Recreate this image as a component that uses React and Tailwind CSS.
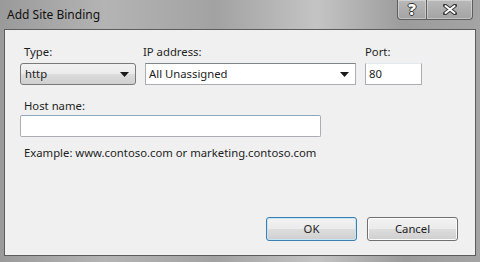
import React from 'react';

const font = { fontFamily: '"Noto Sans", "Open Sans", sans-serif' };

const Arrow = () => (
  <svg width="9" height="5" viewBox="0 0 9 5" className="shrink-0">
    <path d="M0 0 H9 L4.5 5 Z" fill="#1a1a1a" />
  </svg>
);

const Label = ({ children, className = '' }) => (
  <div className={`h-[16px] leading-[16px] text-[11.3px] text-[#1e1e1e] whitespace-nowrap ${className}`}>{children}</div>
);

const btnBg = 'bg-[linear-gradient(180deg,#f2f2f2_0%,#ebebeb_50%,#dddddd_51%,#cfcfcf_100%)]';

export default function App() {
  return (
    <div
      style={font}
      className="w-[480px] h-[262px] flex flex-col px-[4px] pb-[6px] bg-[linear-gradient(90deg,#9a9a9a_0%,#b4b4b4_22%,#a2a2a2_45%,#c4c4c4_66%,#9c9c9c_84%,#a4a4a4_100%)] overflow-hidden"
    >
      {/* Title bar */}
      <div className="h-[29px] flex items-start justify-between shrink-0">
        <div className="pl-[3px] pt-[7px] text-[12px] leading-[16px] text-[#111]">Add Site Binding</div>
        <div className="flex mr-[3px]">
          <div className="w-[30px] h-[20px] flex items-center justify-center border border-t-0 border-[#5e5e5e] rounded-bl-[4px] bg-[linear-gradient(180deg,#b9b9b9,#a3a3a3)] shadow-[inset_0_0_0_1px_rgba(255,255,255,0.35)]">
            <span className="text-[15px] font-black leading-none text-white [text-shadow:1px_0_0_#333,-1px_0_0_#333,0_1px_0_#333,0_-1px_0_#333]">?</span>
          </div>
          <div className="w-[46px] h-[20px] flex items-center justify-center border border-l-0 border-t-0 border-[#5e5e5e] rounded-br-[4px] bg-[linear-gradient(180deg,#b9b9b9,#a3a3a3)] shadow-[inset_0_0_0_1px_rgba(255,255,255,0.35)]">
            <svg width="14" height="11" viewBox="0 0 14 11">
              <path d="M2 1.5 L12 9.5 M12 1.5 L2 9.5" stroke="#3a3a3a" strokeWidth="4" strokeLinecap="round" />
              <path d="M2.5 2 L11.5 9 M11.5 2 L2.5 9" stroke="#fff" strokeWidth="2" strokeLinecap="round" />
            </svg>
          </div>
        </div>
      </div>

      {/* Client area */}
      <div className="flex-1 flex flex-col border border-[#5c5c5c] bg-[#f0f0f0] pl-[15px] pr-[17px] pt-[14px] pb-[14px] text-[11.3px] text-[#1e1e1e]">
        <div className="flex gap-[9px]">
          <div className="w-[116px] flex flex-col">
            <Label className="ml-[4px] mb-[3px]">Type:</Label>
            <div className={`h-[22px] flex items-center justify-between pl-[4px] pr-[6px] border border-[#7a7a7a] rounded-[3px] ${btnBg}`}>
              <span className="leading-[16px]">http</span>
              <Arrow />
            </div>
          </div>
          <div className="w-[211px] flex flex-col">
            <Label className="-ml-[2px] mb-[3px]">IP address:</Label>
            <div className="h-[22px] flex items-center justify-between pl-[3px] pr-[6px] border border-[#abadb3] border-t-[#7f8487] bg-white">
              <span className="leading-[16px]">All Unassigned</span>
              <Arrow />
            </div>
          </div>
          <div className="w-[57px] flex flex-col">
            <Label className="mb-[3px]">Port:</Label>
            <div className="h-[22px] flex items-center pl-[3px] border border-[#abadb3] border-t-[#e3e9ef] bg-white">
              <span className="leading-[16px]">80</span>
            </div>
          </div>
        </div>

        <Label className="ml-[4px] mt-[13px] mb-[1px]">Host name:</Label>
        <div className="w-[301px] h-[22px] border border-[#abadb3] border-t-[#8fa6c0] rounded-[2px] bg-white" />
        <Label className="ml-[4px] mt-[8px]">Example: www.contoso.com or marketing.contoso.com</Label>

        <div className="mt-auto flex justify-end gap-[10px]">
          <button className={`w-[91px] h-[24px] border border-[#3c7fb1] rounded-[3px] ${btnBg} shadow-[inset_0_0_0_1px_#c4e5f6] text-[11.3px] text-[#1e1e1e]`}>
            OK
          </button>
          <button className={`w-[91px] h-[24px] border border-[#707070] rounded-[3px] ${btnBg} shadow-[inset_0_0_0_1px_#fcfcfc] text-[11.3px] text-[#1e1e1e]`}>
            Cancel
          </button>
        </div>
      </div>
    </div>
  );
}
